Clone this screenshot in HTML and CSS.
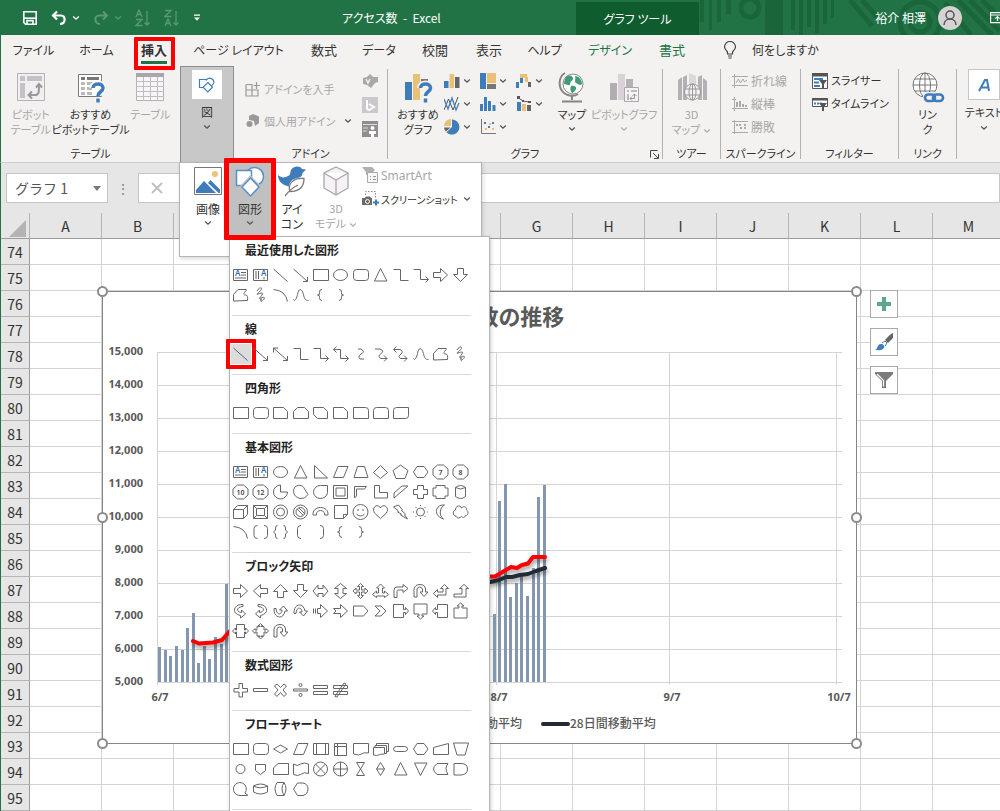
FILE: index.html
```html
<!DOCTYPE html>
<html lang="ja">
<head>
<meta charset="utf-8">
<title>アクセス数 - Excel</title>
<link rel="stylesheet" href="styles.css">
</head>
<body>
<svg class="defs" aria-hidden="true">
  <symbol id="chev" viewBox="0 0 8 6"><path d="M1.2 1.5L4 4.2 6.8 1.5" fill="none" stroke="currentColor" stroke-width="1.3"/></symbol>
</svg>

<header class="titlebar">
  <div class="quick">
    <button class="qa" aria-label="上書き保存"><svg width="16" height="16" viewBox="0 0 16 16" fill="none" stroke="#fff" stroke-width="1.6"><path d="M1.8 1.8h12.4v12.4H3.5l-1.7-1.7z"/><path d="M2 8.2h12" /><path d="M5 14v-3.4h6V14" /></svg></button>
    <button class="qa" aria-label="元に戻す"><svg width="16" height="16" viewBox="0 0 16 16" fill="none" stroke="#fff" stroke-width="2.2"><path d="M6 1.5L2 5.5l4 4M2.5 5.5H10c5 0 5 8-1 8.5"/></svg><svg class="chev" width="8" height="6"><use href="#chev"/></svg></button>
    <button class="qa dim" aria-label="やり直し"><svg width="16" height="16" viewBox="0 0 16 16" fill="none" stroke="currentColor" stroke-width="2"><path d="M10 1.5l4 4-4 4M13.500 5.500H6c-5 0-5 8 1 8.500"/></svg><svg class="chev" width="8" height="6"><use href="#chev"/></svg></button>
    <button class="qa dim" aria-label="昇順"><svg width="16" height="18" viewBox="0 0 16 18" fill="none" stroke="currentColor" stroke-width="1.3"><path d="M1 8L4 1l3 7M2 5.500h4M1 10.500h6l-6 6h6.500M12 2v14M9.500 13.500L12 16l2.500-2.500"/></svg></button>
    <button class="qa dim" aria-label="降順"><svg width="16" height="18" viewBox="0 0 16 18" fill="none" stroke="currentColor" stroke-width="1.3"><path d="M1 1.500h6l-6 6h6.500M1 17l3-7 3 7M2 14.500h4M12 2v14M9.500 13.500L12 16l2.500-2.500"/></svg></button>
    <button class="qa" aria-label="カスタマイズ"><svg width="8" height="8" viewBox="0 0 8 8" fill="#fff"><path d="M1 .5h6v1.300H1zM1 3.500h6L4 6.800z"/></svg></button>
  </div>
  <h1 class="doc">アクセス数&nbsp; -&nbsp; Excel</h1>
  <div class="context">グラフ ツール</div>
  <div class="account">
    <svg class="pattern" width="301" height="35" viewBox="699 0 301 35" aria-hidden="true">
      <g fill="#1b653b"><path d="M700 0h4v22h-4zM709 0h3v30h-3zM717 0h4v22h-4zM726 0h5v14h-5zM765 0h18v35h-18zM791 0h4v30h-4zM799 0h4v35h-4zM807 0h4v27h-4zM815 0h4v33h-4zM823 0h4v24h-4zM831 0h3v18h-3z"/></g>
      <g fill="none" stroke="#1b653b" stroke-width="5"><circle cx="750" cy="8" r="9"/><path d="M850 0l22 26M862 0l16 18M958 0l34 35M970 0l30 31M982 0l18 18M945 3l26 32"/><circle cx="920" cy="22" r="20"/><circle cx="920" cy="22" r="10"/></g>
    </svg>
    <span class="user">裕介 相澤</span>
    <svg width="24" height="24" viewBox="0 0 24 24"><circle cx="12" cy="12" r="12" fill="#d5d3d3"/><g fill="none" stroke="#555" stroke-width="1.500"><circle cx="12" cy="9" r="4"/><path d="M6 19c0-8 12-8 12 0"/></g></svg>
    <svg class="display" width="15" height="12" viewBox="0 0 15 12" fill="none" stroke="#fff" stroke-width="1.200"><path d="M.6.600h13.800v10H.600zM.6 3h14M7.500 9V4.500M5.300 6.700l2.200-2.200 2.200 2.200"/></svg>
  </div>
</header>

<nav class="tabs">
  <button class="kana">ファイル</button><button class="kana">ホーム</button><button class="active"><span>挿入</span></button><button class="kana">ページ レイアウト</button><button>数式</button><button class="kana">データ</button><button>校閲</button><button>表示</button><button class="kana">ヘルプ</button><button class="kana green">デザイン</button><button class="green">書式</button>
  <button class="kana tell"><svg width="14" height="18" viewBox="0 0 14 18" fill="none" stroke="#444" stroke-width="1.200"><path d="M4.500 13v-2C3 9.500 1.500 8 1.500 6a5.500 5.500 0 0 1 11 0c0 2-1.500 3.500-3 5v2zM5 15h4M5.500 17h3"/></svg>何をしますか</button>
</nav>

<section class="ribbon">
  <div class="group g-table">
    <div class="body">
      <button class="big off"><svg width="30" height="31" viewBox="0 0 30 31"><path d="M1.500 1.500h27v27h-27z" fill="#f1eff1" stroke="#b5b1b5"/><path d="M4 4h5v5H4zM11 4h15v5H11zM4 11h5v15H4z" fill="#c5c1c5"/><path d="M13 23h6c4 0 4-3 4-10M20 15.500l3-3.500 3 3.500M16 19.500L12.500 23l3.500 3.500" fill="none" stroke="#9a989a" stroke-width="2"/></svg><span>ピボット<br>テーブル</span></button>
      <button class="big"><svg width="30" height="31" viewBox="0 0 30 31"><path d="M2.500 2.500h23v22h-23z" fill="#fff" stroke="#7a7a7a"/><path d="M5 5h4v3H5zM11 5h12v3H11z" fill="#777"/><path d="M5 10h4v3H5zM5 15h4v3H5zM5 20h4v3H5zM11 10h12v3H11zM11 15h5v3h-5zM11 20h5v3h-5z" fill="#b9b9b9"/><path d="M16.500 16c0-6 11-6 11 0 0 4-5 3.500-5 8M22.500 26.500v4" fill="none" stroke="#fff" stroke-width="6"/><path d="M17 16c0-5.500 10-5.500 10 0 0 4-5 3.500-5 8M22 26.500v4" fill="none" stroke="#3f7cba" stroke-width="3.500"/></svg><span>おすすめ<br>ピボットテーブル</span></button>
      <button class="big off"><svg width="30" height="31" viewBox="0 0 30 31"><path d="M1.500 1.500h27v27h-27z" fill="#f7f5f7" stroke="#b5b1b5"/><path d="M1 1h28v4H1z" fill="#a9a7a9"/><path d="M1 9.500h28M1 14.500h28M1 19.500h28M1 24.500h28M8.500 5v24M15.500 5v24M22.500 5v24" stroke="#c0bcc0"/></svg><span>テーブル</span></button>
    </div>
    <h2>テーブル</h2>
  </div>

  <div class="group g-fig">
    <button class="figbtn" aria-expanded="true"><span class="tile"><svg width="18" height="16" viewBox="0 0 18 16" fill="none" stroke="#3f7cba" stroke-width="1.200"><path d="M8 3V2.500H1.500v8h4M8 3.500C11-1 17 2 15.500 6.500L13.500 9"/><path d="M9.800 5.500l4.700 4.700-4.700 4.700-4.700-4.700z" fill="#fff"/></svg></span><span>図</span><svg class="chev" width="8" height="6"><use href="#chev"/></svg></button>

    <div class="popup">
      <button class="big"><svg width="30" height="31" viewBox="0 0 30 31"><path d="M1.500 1.500h27v27h-27z" fill="#fff" stroke="#777"/><path d="M3 27v-3l8-9 12 12zM15 17l2.500-3L27 23.500V27h-1.500z" fill="#3f7cba"/><circle cx="22" cy="8" r="3" fill="#eec27e"/></svg><span>画像</span><svg class="chev" width="8" height="6"><use href="#chev"/></svg></button>
      <div class="shapes-anchor">
        <button class="big pressed" aria-expanded="true"><svg width="30" height="31" viewBox="0 0 30 31" fill="#fff" stroke="#5a8fc8" stroke-width="1.500"><circle cx="19.500" cy="10.500" r="9"/><path d="M1.500 4.500h15v15h-15z"/><path d="M15.500 12l8.500 9-8.500 9L7 21z" stroke="#c0c0c0" stroke-width="4"/><path d="M15.500 12l8.500 9-8.500 9L7 21z"/></svg><span>図形</span><svg class="chev" width="8" height="6"><use href="#chev"/></svg></button>
        <div class="gallery" id="gallery"></div>
      </div>
      <button class="big"><svg width="30" height="31" viewBox="0 0 30 31"><path d="M1 9c3 3 7 3 10 1 3-1 2-4 3-6 2-4 9-5 11-1l4 .5-3.500 3.500c0 3-2 4-3 4.500-7 1-10 4-10.500 9C5 19 1 15 1 9z" fill="#3f7cba"/><path d="M27 12.500c-10-1-17 5-14 13 9 0 14-4 14-13zM8 30c3-4 7-8 13-11" fill="#fff" stroke="#7a7a7a" stroke-width="1.300"/></svg><span>アイ<br>コン</span></button>
      <button class="big wide off"><svg width="30" height="31" viewBox="0 0 30 31" fill="#f6f2f6" stroke="#aaa6aa" stroke-width="1.300"><path d="M15 1l12 6v15l-12 7-12-7V7zM3 7l12 7 12-7M15 14v15"/></svg><span>3D<br>モデル<svg class="chev inline" width="8" height="6"><use href="#chev"/></svg></span></button>
      <div class="stack">
        <button class="off"><svg width="17" height="18" viewBox="0 0 17 18"><path d="M0 1h10l3 3-3 3H7v2H4V6z" fill="#b1afb1"/><path d="M5.500 6.500h10v10h-10z" fill="#f7f7f7" stroke="#aaa"/><path d="M8 10.500h1m2 0h3M8 13.500h1m2 0h3" stroke="#999"/></svg><span class="lat">SmartArt</span></button>
        <button><svg width="17" height="18" viewBox="0 0 17 18"><path d="M3.500 5V1.500h10V9" fill="none" stroke="#888" stroke-dasharray="1.500 1.500"/><path d="M0 8h3l1-1.500h4L9 8h1v7H0z" fill="#6b6b6b"/><circle cx="5.500" cy="11.500" r="2" fill="none" stroke="#fff"/><path d="M11 12.500h6M14 9.500v6" stroke="#3f7cba" stroke-width="2"/></svg><span>スクリーンショット</span><svg class="chev" width="8" height="6"><use href="#chev"/></svg></button>
      </div>
    </div>
  </div>

  <div class="group g-addin">
    <div class="body">
      <div class="col addins off">
        <button><svg width="16" height="16" viewBox="0 0 16 16" fill="none" stroke="#999" stroke-width="1.200"><path d="M1 3.500h6v5.500M1 3.500v11.500h12V9H1M7 9v6M11.500 1v7M8.500 4.500h6.500"/></svg>アドインを入手</button>
        <button><svg width="16" height="16" viewBox="0 0 16 16" fill="#999"><path d="M8 1l6 2.500V10l-4 3-1-5-5-1V3z"/><circle cx="4.500" cy="11" r="3"/></svg>個人用アドイン<svg class="chev dark" width="8" height="6"><use href="#chev"/></svg></button>
      </div>
      <div class="col minis">
        <button aria-label="Visio"><svg width="16" height="16" viewBox="0 0 16 16"><path d="M5 4l3-3 3 3h5v5l-3 1-4 5-4-3-4-1V5z" fill="#a9a7a9"/><path d="M4 6l2 4 2-4" fill="none" stroke="#eee" stroke-width="1.500"/></svg></button>
        <button aria-label="Bing"><svg width="16" height="16" viewBox="0 0 16 16"><path d="M0 0h16v16H0z" fill="#cbc8cb"/><path d="M5 3v9l2 1 5-3-5-3" fill="none" stroke="#fff" stroke-width="2"/></svg></button>
        <button aria-label="People"><svg width="16" height="16" viewBox="0 0 16 16"><path d="M0 0h16v16H0z" fill="#908e90"/><path d="M1 3.500h14M1 7h5M1 10h4" stroke="#ddd"/><circle cx="10.500" cy="7" r="2" fill="#fff"/><path d="M7 10h7v3h-2v3H9v-3H7z" fill="#fff"/></svg></button>
      </div>
    </div>
    <h2>アドイン</h2>
  </div>

  <div class="group g-chart">
    <div class="body">
      <button class="big w60"><svg width="30" height="31" viewBox="0 0 30 31"><path d="M2 10h7v18H2z" fill="#3f7cba"/><path d="M10 2h7v26h-7z" fill="#eabf76"/><path d="M18 7h7v6h-7z" fill="#777"/><path d="M17 16c0-6 11-6 11 0 0 4-5.500 3.500-5.500 8M22.500 26.500v4" fill="none" stroke="#f3f2f1" stroke-width="6"/><path d="M17.500 16c0-5.500 10-5.500 10 0 0 4-5 3.500-5 8M22.500 26.500v4" fill="none" stroke="#3f7cba" stroke-width="3.500"/></svg><span>おすすめ<br>グラフ</span></button>
      <div class="chartgrid">
        <button aria-label="縦棒"><svg width="16" height="16" viewBox="0 0 16 16"><path d="M0 8h4.500v7H0z" fill="#3f7cba"/><path d="M5.500 1H10v14H5.500z" fill="#eabf76"/><path d="M11 4h4.500v11H11z" fill="#666"/></svg><svg class="chev" width="8" height="6"><use href="#chev"/></svg></button>
        <button aria-label="階層構造"><svg width="16" height="16" viewBox="0 0 16 16"><path d="M0 0h6v16H0z" fill="#3f7cba"/><path d="M7 0h9v10H7z" fill="#eabf76"/><path d="M7 11h9v5H7z" fill="#777"/></svg><svg class="chev" width="8" height="6"><use href="#chev"/></svg></button>
        <button aria-label="ウォーターフォール"><svg width="16" height="16" viewBox="0 0 16 16"><path d="M0 9h3v6H0zM4 3h3v7H4z" fill="#3f7cba"/><path d="M4 1h7v4H4zM9 4h3v5H9z" fill="#eabf76"/><path d="M12 9h3v5h-3z" fill="#666"/></svg><svg class="chev" width="8" height="6"><use href="#chev"/></svg></button>
        <button aria-label="折れ線"><svg width="16" height="16" viewBox="0 0 16 16" fill="none"><path d="M0 14L4.500 3 9 14 14 1" stroke="#555"/><path d="M0 3l4 10 4-11 4 12 3-7" stroke="#3f7cba" stroke-width="1.300"/></svg><svg class="chev" width="8" height="6"><use href="#chev"/></svg></button>
        <button aria-label="統計"><svg width="16" height="16" viewBox="0 0 16 16" fill="#3f7cba"><path d="M0 8h3v7H0zM4 1h3v14H4zM8 5h3v10H8zM12.500 9h3v6h-3z"/></svg><svg class="chev" width="8" height="6"><use href="#chev"/></svg></button>
        <button aria-label="複合"><svg width="16" height="16" viewBox="0 0 16 16"><path d="M1 6h4v9H1z" fill="#3f7cba"/><path d="M6 8h4v7H6z" fill="#eabf76"/><path d="M11 9h4v6h-4z" fill="#666"/><path d="M2 1.500l5 3.500 6 1" fill="none" stroke="#555"/><path d="M1 0h3v3H1zM6 4h2v2H6zM12 5h3v2h-3z" fill="#555"/></svg><svg class="chev" width="8" height="6"><use href="#chev"/></svg></button>
        <button aria-label="円"><svg width="16" height="16" viewBox="0 0 16 16"><path d="M8 8V.5a7.500 7.500 0 1 1-5.500 12.700z" fill="#3f7cba"/><path d="M7 7H0a7 7 0 0 1 7-7z" fill="#eabf76"/><path d="M6.500 8.500L2 12.500A7 7 0 0 1 0 8.500z" fill="#666"/></svg><svg class="chev" width="8" height="6"><use href="#chev"/></svg></button>
        <button aria-label="散布図"><svg width="16" height="16" viewBox="0 0 16 16"><path d="M1.500 0v14.500H16" fill="none" stroke="#777"/><path d="M4 3h2v2H4zM8 7h2v2H8zM12 3h2v2h-2z" fill="#3f7cba"/><path d="M5 9h2v2H5zM9 4h2v2H9zM12 9h2v2h-2z" fill="#eabf76"/></svg><svg class="chev" width="8" height="6"><use href="#chev"/></svg></button>
      </div>
      <button class="big map"><svg width="30" height="31" viewBox="0 0 30 31"><circle cx="16" cy="12" r="10" fill="#fff" stroke="#888"/><path d="M9 5c4-3 6-1 7 1s-3 3-3 6-3 0-6 0c0-3 1-5 2-7zM18 4c4 0 7 4 7 8-2 2-4 0-6-1s0-4-1-7zM14 14c3-1 6 1 5 3s-3 4-4 4c-2-2-2-5-1-7z" fill="#3f9c77"/><path d="M8 1C1 5 1 16 7 21c4 3 10 4 14 1M15 24v4M5 29.500h20" fill="none" stroke="#858585" stroke-width="2"/></svg><span>マップ</span><svg class="chev" width="8" height="6"><use href="#chev"/></svg></button>
      <button class="big off w60"><svg width="30" height="31" viewBox="0 0 30 31"><path d="M1 11h7v17H1z" fill="#b0aeb0"/><path d="M9 2h7v26H9z" fill="#d9d3d9"/><path d="M17 7h7v8h-7z" fill="#b5b3b5"/><path d="M15.500 15.500h14v14h-14z" fill="#f5f3f5" stroke="#aaa"/><path d="M18 18h2v2h-2zM22 18h6v2h-6zM18 22h2v6h-2z" fill="#bbb"/><path d="M21 26.500h4.500V22M23 24.500l-2 2 2 2M23.500 24l2-2 2 2" fill="none" stroke="#999"/></svg><span>ピボットグラフ</span><svg class="chev" width="8" height="6"><use href="#chev"/></svg></button>
    </div>
    <h2>グラフ</h2>
    <button class="launch" aria-label="グラフのオプション"><svg width="9" height="9" viewBox="0 0 9 9" fill="none" stroke="#444"><path d="M.5 7.500v-7h7M3 3l5 5M8.500 4v4.500H4"/></svg></button>
  </div>

  <div class="group g-tour">
    <div class="body"><button class="big off fill"><svg width="30" height="31" viewBox="0 0 30 31"><path d="M1 8l4-3v23H1zM6 5l4-2v25H6zM21 5l4-2v25h-4zM26 6l4 3v19h-4z" fill="#b3b1b3"/><path d="M12 1l7 3v10h-7z" fill="#dcd8dc"/><circle cx="15.500" cy="20" r="8" fill="#f3f2f3" stroke="#999"/><ellipse cx="15.500" cy="20" rx="3.500" ry="8" fill="none" stroke="#999"/><path d="M8 17h15M8 23h15M15.500 12v16" stroke="#999" fill="none"/></svg><span>3D<br>マップ<svg class="chev inline" width="8" height="6"><use href="#chev"/></svg></span></button></div>
    <h2>ツアー</h2>
  </div>

  <div class="group g-spark">
    <div class="body"><div class="col list off">
      <button><svg width="16" height="16" viewBox="0 0 16 16" fill="none" stroke="#aaa"><path d="M2.500 1v14M0 3.500h16M0 12.500h16M4 10l2.500-4 2 4 2.500-4 1.500 3 2.500-2"/></svg>折れ線</button>
      <button><svg width="16" height="16" viewBox="0 0 16 16" fill="none" stroke="#aaa"><path d="M2.500 1v14M0 12.500h16M0 3.500h4"/><path d="M5 11V6m3 5V5m3 6V8m3 3V9" stroke-width="2"/></svg>縦棒</button>
      <button><svg width="16" height="16" viewBox="0 0 16 16" fill="none" stroke="#aaa"><path d="M2.500 1v14M0 2.500h16M0 13.500h16"/><path d="M4 6h2m1 0h2m-1 3h2m2-3h2m-2 3h2" stroke-width="2"/></svg>勝敗</button>
    </div></div>
    <h2>スパークライン</h2>
  </div>

  <div class="group g-filter">
    <div class="body"><div class="col list">
      <button><svg width="16" height="16" viewBox="0 0 16 16"><path d="M.5.500h15v15H.500z" fill="#fff" stroke="#555"/><path d="M0 0h16v3.500H0z" fill="#555"/><path d="M2 6h9M2 9.500h5M2 13h6" stroke="#3f7cba" stroke-width="2"/><path d="M7 7h8l-3 4v5h-2v-5z" fill="#555"/></svg>スライサー</button>
      <button><svg width="16" height="16" viewBox="0 0 16 16"><path d="M.5 2.500h15v8H.500z" fill="#fff" stroke="#555"/><path d="M0 2h16v2.500H0z" fill="#555"/><path d="M2 7.500h2m1 0h2m1 0h2" stroke="#3f7cba" stroke-width="2"/><path d="M7 7h8l-3 4v4h-2v-4z" fill="#555"/></svg>タイムライン</button>
    </div></div>
    <h2>フィルター</h2>
  </div>

  <div class="group g-link">
    <div class="body"><button class="big fill"><svg width="34" height="31" viewBox="0 0 34 31"><g fill="none" stroke="#777"><circle cx="14" cy="13" r="12" fill="#fff"/><ellipse cx="14" cy="13" rx="5.500" ry="12"/><path d="M14 1v24M2 13h24M4 7h20M4 19h20"/></g><rect x="12" y="20" width="22" height="11" fill="#f3f2f1"/><g fill="none" stroke="#3f7cba" stroke-width="2.600"><rect x="14" y="22.500" width="10" height="6.500" rx="3.200"/><rect x="22" y="22.500" width="10" height="6.500" rx="3.200"/></g></svg><span>リン<br>ク</span></button></div>
    <h2>リンク</h2>
  </div>

  <div class="group g-text">
    <button class="figbtn"><span class="tile framed"><svg width="16" height="16" viewBox="0 0 16 16" fill="none" stroke="#3f7cba" stroke-width="2"><path d="M3 14L9 3h2l2 11M5.500 10.500h7"/></svg></span><span>テキスト</span><svg class="chev" width="8" height="6"><use href="#chev"/></svg></button>
  </div>
</section>

<section class="formula">
  <div class="namebox"><input type="text" value="グラフ 1" aria-label="名前ボックス"><svg width="8" height="5" viewBox="0 0 8 5"><path d="M0 0h8L4 5z" fill="#777"/></svg></div>
  <span class="dots">⋮</span>
  <div class="fx"><button aria-label="キャンセル"><svg width="12" height="12" viewBox="0 0 12 12" stroke="#c0c0c0" stroke-width="2"><path d="M1 1l10 10M11 1L1 11"/></svg></button><input type="text" aria-label="数式バー"></div>
</section>

<main class="sheet">
  <table>
    <colgroup><col class="c-head"><col span="2"><col class="c-wide" span="3"><col class="c-f"><col span="10"></colgroup>
    <thead><tr id="cols"><th class="corner"><svg width="17" height="17" viewBox="0 0 17 17"><path d="M17 0v17H0z" fill="#b4b4b4"/></svg></th></tr></thead>
    <tbody id="rows"></tbody>
  </table>

  <svg class="chart" width="768" height="466" viewBox="96 285 768 466" role="img" aria-label="アクセス数の推移">
    <rect x="102.500" y="291.500" width="754" height="452" fill="#fff" stroke="#858585"/>
    <g id="grid" stroke="#d4d4d4"></g>
    <g id="bars" fill="#8497b0"></g>
    <g class="series">
      <polyline points="490,582 499,580 506,577 512,577 520,575 528,574 536,571 545,568" stroke="#222b35"/>
      <polyline points="193,641 199,643.500 213,642.500 222,640 229,632 260,610 380,590 480,577 490,576.500 495,576.500 500,573.500 511,567 517,568 522,565 528,563.500 533,557 545,557" stroke="#f00"/>
    </g>
    <text class="ct" x="480" y="325" text-anchor="middle">アクセス数の推移</text>
    <g id="labels" class="axis"></g>
    <g class="legend"><text x="522" y="728" text-anchor="end">7日間移動平均</text><path d="M543 724h25" stroke="#222b35" stroke-width="4" stroke-linecap="round"/><text x="570" y="728">28日間移動平均</text></g>
    <g fill="#fff" stroke="#8c8c8c" stroke-width="2"><circle cx="102.500" cy="291.500" r="4.500"/><circle cx="102.500" cy="517.500" r="4.500"/><circle cx="102.500" cy="743.500" r="4.500"/><circle cx="856.500" cy="291.500" r="4.500"/><circle cx="856.500" cy="517.500" r="4.500"/><circle cx="856.500" cy="743.500" r="4.500"/></g>
  </svg>
  <div class="sidebtns">
    <button aria-label="グラフ要素"><svg width="20" height="20" viewBox="0 0 20 20"><path d="M8 3h4v5h5v4h-5v5H8v-5H3V8h5z" fill="#5fa58a"/></svg></button>
    <button aria-label="グラフスタイル"><svg width="20" height="20" viewBox="0 0 20 20"><path d="M19 1v5l-5 5-3-3c3-3 5-6 8-7z" fill="#666"/><path d="M1 18c3-1 2-6 6-6 2 0 4 2 3 4-2 3-6 2-9 2z" fill="#3f7cba"/><path d="M8 11l3-2 2 2-2 3" fill="#fff" stroke="#3f7cba"/></svg></button>
    <button aria-label="グラフフィルター"><svg width="20" height="20" viewBox="0 0 20 20"><path d="M1 2h18v2l-7 7v7H8v-7L1 4z" fill="#7b7b7b"/><path d="M3 4l6.500 6.500v6" fill="none" stroke="#fff" stroke-width="1.200"/></svg></button>
  </div>
</main>
<script src="script.js"></script>
</body>
</html>
```

FILE: styles.css
```css
* { box-sizing: border-box; }
body {
  margin: 0;
  height: 100vh;
  overflow: hidden;
  display: flex;
  flex-direction: column;
  background: #e6e6e6;
  color: #333;
  font: 12px/15px "Noto Sans CJK JP", "Noto Sans", sans-serif;
  font-feature-settings: "palt";
}
button {
  font: inherit;
  font-feature-settings: inherit;
  color: inherit;
  background: none;
  border: 0;
  padding: 0;
  margin: 0;
  white-space: nowrap;
}
input { font: inherit; font-feature-settings: inherit; border: 0; background: none; min-width: 0; }
svg { flex: none; display: block; }
h1, h2 { margin: 0; font-weight: 400; }
.defs { position: absolute; width: 0; height: 0; }
.off { color: #a8a6a6; }
.chev { color: #555; }
.off .chev { color: #b0aeae; }
.off .chev.dark { color: #555; }

/* title bar */
.titlebar {
  flex: none;
  height: 35px;
  background: #217346;
  color: #fff;
  display: grid;
  grid-template-columns: 306px 270px 123px 1fr;
  align-items: center;
}
.quick { display: flex; align-items: center; gap: 13px; padding-left: 22px; }
.qa { display: flex; align-items: center; gap: 5px; color: #fff; }
.qa .chev { color: inherit; }
.dim { color: #5c9877; }
.doc { font-size: 12px; padding-left: 36px; }
.context {
  align-self: stretch;
  margin-top: 2px;
  background: #0f5c2e;
  display: flex;
  align-items: center;
  justify-content: center;
}
.account { height: 35px; display: flex; align-items: center; justify-content: flex-end; gap: 11px; position: relative; overflow: hidden; }
.account > * { position: relative; }
.account .pattern { position: absolute; left: 0; top: 0; }
.account .user { margin-right: 1px; }
.display { margin: 0 -5px 0 17px; }

/* tabs */
.tabs {
  flex: none;
  height: 32px;
  padding-bottom: 3px;
  background: #f3f2f1;
  border-left: 1px solid #217346;
  display: grid;
  grid-template-columns: 65px 61px 54px 115px 56px 54px 58px 50px 61px 70px 54px 1fr;
  font-size: 13px;
}
.tabs button { display: flex; justify-content: center; align-items: center; }
.tabs .kana { font-size: 12px; }
.tabs .green { color: #217346; }
.tabs .active { position: relative; font-weight: 700; }
.tabs .active span { height: 25px; padding-top: 3px; border-bottom: 3px solid #217346; margin-top: 4px; }
.tabs .active::after { content: ""; position: absolute; inset: 2px 6px -6px 7px; border: 4px solid #f00; border-radius: 1px; z-index: 3; }
.tabs .tell { justify-content: flex-start; gap: 15px; padding-left: 24px; }

/* ribbon */
.ribbon {
  flex: none;
  height: 96px;
  background: #f3f2f1;
  border-left: 1px solid #217346;
  border-bottom: 1px solid #cfcdcd;
  display: flex;
  position: relative;
  z-index: 2;
}
.group { flex: none; display: flex; flex-direction: column; position: relative; margin: 2px 0 3px; border-right: 1px solid #b3b1b1; }
.group h2 { font-size: 11px; text-align: center; line-height: 12px; margin-top: auto; }
.body { display: flex; flex: none; height: 74px; }
.g-table { width: 179px; border: 0; }
.g-addin { width: 154px; }
.g-chart { width: 275px; }
.g-tour { width: 58px; }
.g-spark { width: 80px; }
.g-filter { width: 98px; }
.g-link { width: 58px; }
.g-text { width: 54px; border: 0; }
.big { width: 60px; padding-top: 3px; display: flex; flex-direction: column; align-items: center; gap: 4px; font-size: 11px; }
.big span { text-align: center; }
.chev.inline { display: inline-block; margin-left: 3px; }
.fill { width: 100%; }
.g-fig { width: 54px; margin: -1px 0 0; background: #c8c8c8; border: 1px solid #8e8e8e; border-bottom: 0; }
.figbtn { display: flex; flex-direction: column; align-items: center; padding-top: 3px; gap: 5px; }
.g-text .figbtn { padding-top: 0; font-size: 11px; }
.tile { width: 30px; height: 29px; background: #fff; display: grid; place-items: center; }
.tile.framed { width: 32px; height: 31px; border: 1px solid #c6c6c6; }
.col { display: flex; flex-direction: column; }
.col button { display: flex; align-items: center; gap: 3px; height: 23px; }
.addins { padding: 4px 0 0 11px; width: 128px; font-size: 11px; }
.addins button { height: 32px; }
.addins .chev { margin-left: auto; margin-right: 10px; }
.minis button { height: 24px; }
.list { padding-left: 11px; }
.g-filter .list { font-size: 11px; }
.chartgrid { display: grid; grid-template-columns: repeat(3, 36px); grid-auto-rows: 23px; margin: 0 2px 0 -4px; }
.chartgrid button { display: flex; align-items: center; gap: 3px; }
.map { width: 44px; }
.g-chart .map { margin-left: -4px; }
.launch { position: absolute; right: 3px; bottom: 0; }

/* picture menu */
.popup {
  position: absolute;
  top: 95px;
  left: -2px;
  width: 303px;
  height: 95px;
  padding-left: 7px;
  background: #fff;
  border: 1px solid #b5b5b5;
  box-shadow: 1px 2px 4px rgba(0, 0, 0, .15);
  display: flex;
  align-items: flex-start;
}
.popup .big { width: 42px; height: 73px; font-size: 12px; }
.popup .wide { width: 46px; font-size: 11px; }
.pressed { background: #c0c0c0; }
.shapes-anchor { position: relative; }
.shapes-anchor::after { content: ""; position: absolute; inset: -5px -5px -4px; border: 5px solid #f00; border-radius: 1px; z-index: 3; }
.stack { padding-left: 3px; font-size: 10px; }
.stack button { display: flex; align-items: center; gap: 2px; height: 24px; }
.lat { font: 12px/15px "Noto Sans", sans-serif; }
.stack .chev { margin-left: 3px; }

/* shape gallery */
.gallery {
  position: absolute;
  top: 73px;
  left: 0;
  width: 261px;
  padding-bottom: 20px;
  background: #fff;
  border: 1px solid #b5b5b5;
  box-shadow: 1px 2px 4px rgba(0, 0, 0, .2);
  z-index: 2;
}
.shape-set { margin: 0 18px 0 2px; padding-bottom: 10px; border-bottom: 1px solid #d9d9d9; }
.shape-set h3 { margin: 0; padding-left: 13px; font-size: 12px; font-weight: 700; line-height: 26px; height: 28px; color: #222; }
.shape-grid { display: grid; grid-template-columns: repeat(12, 20px); margin: 0 -10px 0 -1px; }
.shape-grid button { position: relative; height: 20px; }
.shape-grid svg { fill: none; stroke: #666; stroke-width: 1; }
.shape-grid svg text { fill: #444; stroke: none; font: 600 7px "Noto Sans", sans-serif; }
.shape-grid svg .blue { fill: #2f6fb3; font-size: 8px; }
.shape-grid .picked { background: #dcdcdc; }
.shape-grid .picked::after { content: ""; position: absolute; inset: -5px; border: 4px solid #f00; border-radius: 1px; }

/* formula bar */
.formula { flex: none; height: 50px; border-left: 1px solid #217346; padding: 10px 0 10px 5px; display: flex; align-items: center; }
.namebox { width: 102px; height: 30px; background: #fff; border: 1px solid #c6c6c6; display: flex; align-items: center; padding: 0 6px; font-size: 14px; }
.namebox input { width: 80px; color: #555; font-feature-settings: normal; }
.dots { width: 30px; text-align: center; font-size: 14px; color: #888; }
.fx { flex: 1; height: 30px; background: #fff; border: 1px solid #c6c6c6; display: flex; align-items: center; padding-left: 12px; }
.fx input { flex: 1; }

/* worksheet */
.sheet { flex: 1; min-height: 0; position: relative; overflow: hidden; border-left: 1px solid #217346; background: #fff; }
table { table-layout: fixed; width: 1218px; border-collapse: separate; border-spacing: 0; }
col { width: 72px; }
.c-head { width: 29px; }
.c-wide { width: 82px; }
.c-f { width: 81px; }
th, td { height: 26px; padding: 0; border-right: 1px solid #d4d4d4; border-bottom: 1px solid #d4d4d4; }
th { background: #e6e6e6; font-size: 14px; font-weight: 400; line-height: 20px; border-color: #b5b5b5; color: #333; }
thead th { border-bottom-color: #9c9c9c; }
tbody th { border-right-color: #9c9c9c; }
.corner svg { margin: 5px 0 0 8px; }
.chart { position: absolute; left: 95px; top: 72px; }
.chart text { fill: #595959; }
.ct { font-size: 22px; font-weight: 700; }
.axis { font: 700 11px "Noto Sans", sans-serif; }
.legend { font-size: 12px; font-weight: 500; }
.series { filter: drop-shadow(1px 3px 2px rgba(0, 0, 0, .4)); }
.series polyline { fill: none; stroke-width: 4; stroke-linejoin: round; stroke-linecap: round; }
.sidebtns { position: absolute; left: 869px; top: 77px; display: grid; gap: 10px; }
.sidebtns button { width: 28px; height: 28px; background: #fff; border: 1px solid #aaa; display: grid; place-items: center; }
```

FILE: script.js
```js
// Each shape is drawn in a 20 x 20 cell, centred on 9.5, 10.
const circle = (x, y, r, s = r) => `M${x - r} ${y}a${r} ${s} 0 1 0 ${2 * r} 0a${r} ${s} 0 1 0 ${-2 * r} 0`;
const octagon = 'M6.5 3h6l4.500 4v6l-4.500 4h-6L2 13V7z';
const S = {
  rect: 'M2.5 4.5h15v11h-15z',
  oval: circle(9.5, 10, 7, 5.5),
  round: 'M5.5 4.5h9q3 0 3 3v5q0 3-3 3h-9q-3 0-3-3v-5q0-3 3-3z',
  tri: 'M9.5 3.5L16 16H3.5z',
  line: 'M2.5 4L16.5 16.5',
  lineArrow: 'M2.5 4L16.5 16.5M16.5 12v4.500h-4.500',
  lineDouble: 'M2.5 4L16.5 16.5M16.5 12v4.500h-4.500M2.500 8.500V4H7',
  elbow: 'M2.5 4.500h7v11h8',
  elbowArrow: 'M2.5 4.500h7v10h8M14.500 11.500l3 3-3 3',
  elbowDouble: 'M2.5 5.500h7v9h8M14.500 11.500l3 3-3 3M5.500 2.500l-3 3 3 3',
  curved: 'M7 5h3q4 2 1 4.500-5 2-2 5.500h4',
  curvedArrow: 'M4 5h5q5 2 1 4.500-4 3 0 5h6M13 11.500l3 3-3 3',
  curvedDouble: 'M3 5.500h6q4 2 1 4.500-4 3 0 4.500h6M13 11.500l3 3-3 3M5.500 2.500l-3 3 3 3',
  right: 'M2.5 7.500h7v-4l7 6.500-7 6.500v-4h-7z',
  down: 'M6.5 3.500h6v6h4l-7 7-7-7h4z',
  free: 'M2.500 16V9.500l4.500-5h8c1 0 0 1-1 2.500-2 2-1 3 .500 3 2 0 2.500 2 2 5.500z',
  scribble: 'M6 6c2-4 6-4 4-1s-6 5-3 4 6-2 4 1-4 4-1 3 4-1 3 1-3 2-3 0-1 3 1 3',
  arc: 'M2.5 4.500q12 1 14 12',
  wave: 'M2.500 14.500c1 2 3 0 4-5 1-6 4-7 6 0 1 5 2 6 5 6',
  braceL: 'M11 4.500q-3 0-2.500 3t-2 2.500q2.500 0 2 2.500t2.500 3',
  snip1: 'M2.5 4.500h10l4 4v7h-14z',
  snip2: 'M6.500 4.500h7l4 4v7h-15v-7z',
  snipD: 'M2.5 4.500h10l4 4v7h-10l-4-4z',
  round1: 'M2.5 4.500h12q3 0 3 3v8h-15z',
  round2: 'M5.500 4.500h9q3 0 3 3v8h-15v-8q0-3 3-3z',
  roundD: 'M5.500 4.500h12v8q0 3-3 3h-12v-8q0-3 3-3z',
  rtri: 'M3.500 3.500v12.500h13z', para: 'M7 4.500h10L12.500 15.500H2.500z', trap: 'M6.500 4.500h7l3.500 11H3z',
  diamond: 'M9.5 3.500l7 7-7 6-7-6z', penta: 'M9.5 3l7.500 5.500-3 8H5l-3-8z', hexa: 'M6 4.500h7l4 5.500-4 5.500H6L2.500 10z',
  pie: 'M9.5 3v7h7a7 7 0 1 1-7-7z', chord: 'M4.500 4.500C9 2 12 4 13 6l4 6.500q-3 5-8 4C2 15 1 8 4.500 4.500z',
  tear: 'M9.500 3.500h7v7a7 6.500 0 1 1-7-7z', frame: 'M2.500 3.500h14v13h-14zM5 6h9v8H5z',
  half: 'M3.500 16V4.500h12l-2 2.500h-8v7z', ell: 'M3.500 3.500h5v7h8v5.500h-13z', stripe: 'M3 16v-5L11 4h6z',
  plus: 'M6.500 3.500h6v4h4v5h-4v4h-6v-4h-4v-5h4z', plaque: 'M5 3.500h9v2.500h3v8h-3v2.500H5V14H2V6h3z',
  can: 'M4.500 5.500v9q5 4 10 0v-9q-5-4-10 0q5 3 10 0', cube: 'M2.500 7.500l4-4h10v9l-4 4h-10zM2.500 7.500h10v9M12.500 7.500l4-4',
  bevel: 'M2.500 3.500h14v13h-14zM5.500 6.500h8v7h-8zM2.500 3.500l3 3M16.500 3.500l-3 3M2.500 16.500l3-3M16.500 16.500l-3-3',
  donut: circle(9.5, 10, 7) + circle(9.5, 10, 4), no: circle(9.5, 10, 7) + circle(9.5, 10, 4.5) + 'M6 7l6 6M8 6l6 6',
  block: 'M2 13C1 3 18 3 17 13h-3.500c1-6-9-6-8 0z', fold: 'M3.500 3.500h13v9l-4 4h-9zM12.500 16.500v-4h4',
  smile: circle(9.5, 10, 7.5) + 'M7 7v2M12 7v2M5.500 12q4 4 8 0', heart: 'M9.5 16.500L3.500 11C0 5 7 1 9.500 6 12 1 19 5 15.500 11z',
  bolt: 'M2.500 5l5-2 4 5-1 .500 4 3.500-1 1 3 4-7-4 1-1-4-2 1-1z', sun: circle(9.5, 10, 4) + 'M9 3.500h1M9 16.500h1M2.500 9.500v1M16.500 9.500v1M4.500 5l1 1M14.500 5l-1 1M4.500 15l1-1M14.500 15l-1-1',
  moon: 'M13.500 3C4 2 2 14 12.500 17 8 14 8 6 13.500 3z', cloud: 'M5 14c-4 0-3-6-.500-6 0-5 5-5 6-2 3-3 6 0 5 2 3 2 1 6-1 5.500-1 3-3 2-4 1-2 2-5 2-5.500-.500z',
  brackets: 'M6.500 3.500q-3.500 0-3.500 3v7q0 3 3.500 3M13 3.500q3.500 0 3.500 3v7q0 3-3.500 3',
  braces: 'M6.500 3.500q-2 0-2 2.500v2l-2 2 2 2v2q0 2.500 2 2.500M12.500 3.500q2 0 2 2.500v2l2 2-2 2v2q0 2.500-2 2.500',
  bracketL: 'M10 3.500q-3.500 0-3.500 3v7q0 3 3.500 3',
  leftRight: 'M2 10l5-6v3.500h5V4l5 6-5 6v-3.500H7V16z',
  quad: 'M9.5 2.500l3 3h-2V9H14V7l3 3-3 3v-2h-3.500v3.500h2l-3 3-3-3h2V11H5v2l-3-3 3-3v2h3.500V5.500h-2z',
  triArrow: 'M9.500 3l4 4h-2v5h2v-2l4 3.500-4 3V15h-8v1.500l-4-3 4-3.500v2h2V7h-2z',
  bent: 'M3 16.500V9q0-3 3-3h6V3.500l5 4-5 4V9H7.500q-1.500 0-1.500 1.500v6z',
  uturn: 'M3 16V8q1-4.500 6-4.500T14.500 8v3H17l-4 4.500L9 11h2.500V8q-1-2-3-2T6 8v8z',
  leftUp: 'M2.500 12.500l4-4v2.500H12V7.500h-2.500l4-4 4 4H15V14H6.500v2.500z', bentUp: 'M3 13h8V7.500H8.500l4.500-4 4.500 4H15v8.500H3z',
  curveR: 'M12 3.500C4 3 2 9 4.500 12q2 2 5 2.500V17l5-4-4-4v2.500C5 11 5 6 12 5.500z',
  striped: 'M2.500 7.500v5M4.500 7.500v5M6.500 7.500h3v-4l7 6.500-7 6.500v-4h-3z', notch: 'M2.500 7.500h7v-4l7 6.500-7 6.500v-4h-7l2.500-2.500z',
  home: 'M2.500 5h10l4.500 5-4.500 5h-10z', chevron: 'M4 5h6l5 5-5 5H4l5-5z',
  callout: 'M2.500 3.500h10v5h2V6.500l3 3.500-3 3.500v-2h-2v5h-10z',
  crossCall: 'M6 5.500h3V5H7l2.500-2.500L12 5h-2v.500h3V9h2V7.500l2.500 2.500-2.500 2.500V11h-2v4h-3v.5h2L9.500 18 7 15.500h2V15H6v-4H4v1.500L1.500 10 4 7.500V9h2z',
  leftRightCall: 'M5.500 3.500h8V9h1V7l3 3-3 3v-2h-1v5.500h-8V11h-1v2l-3-3 3-3v2h1z',
  mplus: 'M8 3.500h3.500v5h5V12h-5v5H8v-5H3V8.500h5z', minus: 'M2.500 8.500h14v3h-14z',
  times: 'M3.500 6L6 4l3.500 3.500L13 4l2.500 2L12 10l3.500 4-2.500 2.500-3.500-4-3.500 4L3.500 14 7 10z',
  divide: 'M2.500 9h14v2h-14z' + circle(9.5, 5, 1.5) + circle(9.5, 15, 1.5), equal: 'M2.500 5.500h14v3h-14zM2.500 11.500h14v3h-14z',
  notEqual: 'M2.500 5.500h14v3h-14zM2.500 11.500h14v3h-14zM4 16.500L13 3l2 1L6 17z',
  fdiamond: 'M9.500 6l7 4-7 4-7-4z', pre: 'M2.500 4.500h15v11h-15zM5.500 4.500v11M14.500 4.500v11', internal: 'M3.500 4.500h12v12h-12zM6.500 4.500v12M3.500 7.500h12',
  doc: 'M2.500 4.500h15V14q-5-1-7 1t-8 0z', docs: 'M5.500 7V4.500h12v8h-2M4 9V6.500h11.500v8h-2M2.500 8.500h11V15q-5 0-6 1t-5 0z',
  term: 'M5.500 7.500h8q3 0 3 2.500t-3 2.500h-8q-3 0-3-2.500t3-2.500z', manual: 'M2.500 8.500l15-4v11h-15z', manop: 'M2.500 4h15l-3.500 12H6z',
  dot: circle(9.5, 10, 4.5), offpage: 'M4.500 5.500h10v6l-5 4-5-4z', card: 'M7 4.500h10.500v11h-15V9z',
  tape: 'M2.500 5q4 3 7 0 4-2 8 0v9.500q-4-2-8 1-3 2-7 0z', sumj: circle(9.5, 10, 7) + 'M4.500 5l10 10M14.500 5l-10 10', orj: circle(9.5, 10, 7) + 'M2.500 10h14M9.500 3v14',
  collate: 'M5.500 3.500h8l-8 13h8z', sort: 'M9.500 3.500l4 6.500-4 6.500-4-6.500zM5.500 10h8', stored: 'M6 4.500h11q-4 5 0 11H6q-7-5.500 0-11z',
  delay: 'M3 4.500h7q6.500 0 6.500 5.500T10 16H3z', seq: 'M16.500 16.500H9a6.500 6.500 0 1 1 5-2.500l3 2.500', disk: 'M2.500 7v6q7 4 14 0V7q-7-4-14 0q7 3.500 14 0',
  drum: 'M6 3.500h7q4 6 0 13H6q-4-7 0-13zM13 3.500q-4 6 0 13', disp: 'M2.500 10l4-6H12q5 1 5 6t-5 6.500H6.500z'
};
const M = 'translate(19 0) scale(-1 1)';
const V = 'translate(0 20) scale(1 -1)';
const rot = a => `rotate(${a} 9.5 10)`;
const sets = [
  ['最近使用した図形', ['#h', '#v', 'line', 'lineArrow', 'rect', 'oval', 'round', 'tri', 'elbow', 'elbowArrow', 'right', 'down', 'free', 'scribble', 'arc', 'wave', 'braceL', ['braceL', M]]],
  ['線', ['line*', 'lineArrow', 'lineDouble', 'elbow', 'elbowArrow', 'elbowDouble', 'curved', 'curvedArrow', 'curvedDouble', 'wave', 'free', 'scribble']],
  ['四角形', ['rect', 'round', 'snip1', 'snip2', 'snipD', 'snip1', 'round1', 'round2', 'roundD']],
  ['基本図形', ['#h', '#v', 'oval', 'tri', 'rtri', 'para', 'trap', 'diamond', 'penta', 'hexa', '#7', '#8', '#10', '#12', 'pie', 'chord', 'tear', 'frame', 'half', 'ell', 'stripe', 'plus', 'plaque', 'can', 'cube', 'bevel', 'donut', 'no', 'block', 'fold', 'smile', 'heart', 'bolt', 'sun', 'moon', 'cloud', 'arc', 'brackets', 'braces', 'bracketL', ['bracketL', M], 'braceL', ['braceL', M]]],
  ['ブロック矢印', ['right', ['right', M], ['down', V], 'down', 'leftRight', ['leftRight', rot(90)], 'quad', 'triArrow', 'bent', 'uturn', 'leftUp', 'bentUp', 'curveR', ['curveR', M], ['curveR', rot(-90)], ['curveR', `${rot(90)} ${V}`], 'striped', 'notch', 'home', 'chevron', 'callout', ['callout', rot(90)], ['callout', M], ['callout', rot(-90)], 'leftRightCall', 'crossCall', 'uturn']],
  ['数式図形', ['mplus', 'minus', 'times', 'divide', 'equal', 'notEqual']],
  ['フローチャート', ['rect', 'round', 'fdiamond', 'para', 'pre', 'internal', 'doc', 'docs', 'term', 'hexa', 'manual', 'manop', 'dot', 'offpage', 'card', 'tape', 'sumj', 'orj', 'collate', 'sort', 'tri', ['tri', V], 'stored', 'delay', 'seq', 'disk', 'drum', 'disp']]
];

function drawing(item) {
  const [name, transform] = Array.isArray(item) ? item : [item, ''];
  if (name === '#h') return '<path d="M2.500 4.500h14v11h-14zM10 7.500h5M10 10h5M4 13h11"/><text class="blue" x="4" y="11">A</text>';
  if (name === '#v') return '<path d="M2.500 4.500h14v11h-14zM5 6v8M7.500 6v8M13 12v2.500"/><text class="blue" x="10" y="11">A</text>';
  if (name[0] === '#') return `<path d="${octagon}"/><text x="9.5" y="12.500" text-anchor="middle">${name.slice(1)}</text>`;
  return `<path d="${S[name.replace('*', '')]}" transform="${transform}"/>`;
}

document.getElementById('gallery').innerHTML = sets.map(([title, items]) =>
  `<section class="shape-set"><h3>${title}</h3><div class="shape-grid">${items.map(i =>
    `<button class="${String(i).includes('*') ? 'picked' : ''}" aria-label="${title}"><svg width="20" height="20" viewBox="0 0 20 20">${drawing(i)}</svg></button>`).join('')}</div></section>`).join('');

const letters = [...'ABCDEFGHIJKLMNOP'];
document.getElementById('cols').insertAdjacentHTML('beforeend', letters.map(l => `<th>${l}</th>`).join(''));
let rows = '';
for (let r = 74; r < 110; r++) rows += `<tr><th>${r}</th>${'<td></td>'.repeat(letters.length)}</tr>`;
document.getElementById('rows').innerHTML = rows;

// Chart: 33px for each thousand, baseline 5,000 at y = 682
let grid = '', labels = '';
for (let k = 5; k <= 15; k++) {
  const y = 682 - (k - 5) * 33;
  grid += `<path d="M157 ${y}.5H842"/>`;
  labels += `<text x="143" y="${y + 3}" text-anchor="end">${k},000</text>`;
}
[[157, '6/7'], [324, '7/7'], [496, '8/7'], [669, '9/7'], [836, '10/7']].forEach(([x, t]) => {
  grid += `<path d="M${x}.5 352V685"/>`;
  labels += `<text x="${x + 3}" y="701" text-anchor="middle">${t}</text>`;
});
document.getElementById('grid').innerHTML = grid;
document.getElementById('labels').innerHTML = labels;
const tops = [[158, 647], [164, 650], [169, 656], [175, 646], [181, 650], [186, 628], [192, 613], [197, 663], [203, 646], [208, 659], [214, 637], [220, 644], [225, 584],
  [493, 614], [498, 501], [504, 484], [509, 597], [515, 583], [520, 576], [526, 596], [532, 568], [537, 497], [543, 485]];
document.getElementById('bars').innerHTML = tops.map(([x, y]) => `<rect x="${x}" y="${y}" width="3" height="${682 - y}"/>`).join('');
```
